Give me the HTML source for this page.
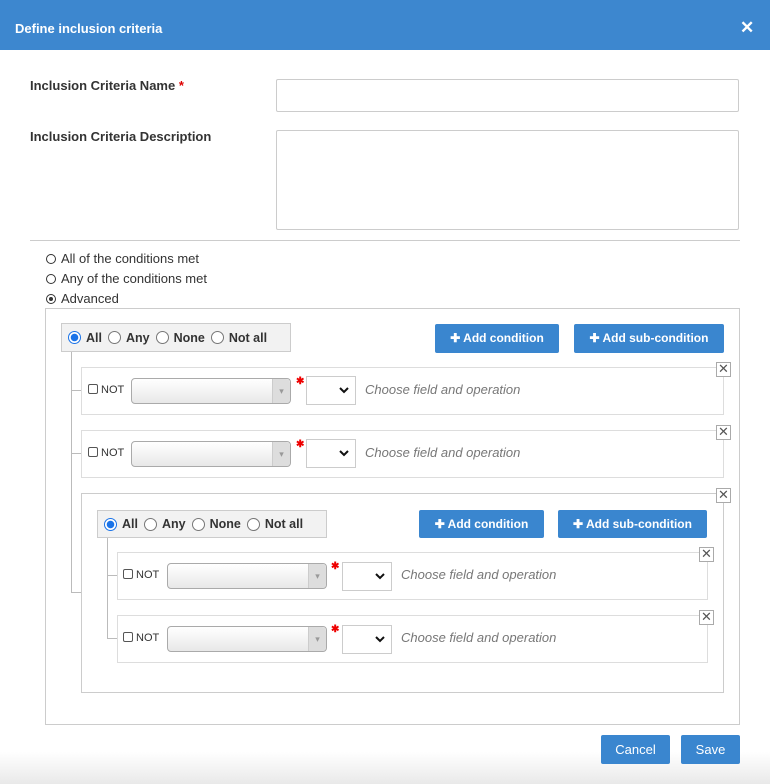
<!DOCTYPE html>
<html><head><meta charset="utf-8"><style>
*{box-sizing:border-box;margin:0;padding:0}
body{width:770px;height:784px;position:relative;overflow:hidden;background:#fff;font-family:"Liberation Sans",sans-serif;color:#333}
.a{position:absolute}
.hdr{left:0;top:0;width:770px;height:50px;background:#3d87cf;color:#fff;font-weight:bold;font-size:13px;line-height:13px;padding:22px 0 0 15px}
.lbl{font-weight:bold;font-size:13px;color:#333}
.inp{border:1px solid #ccc;background:#fff;border-radius:2px}
.rad{font-size:13px;color:#333}
.rad i{display:inline-block;width:10px;height:10px;border:1.5px solid #333;border-radius:50%;vertical-align:-1px;margin-right:5px;position:relative}
.rad i.on:after{content:"";position:absolute;left:1.5px;top:1.5px;width:4px;height:4px;border-radius:50%;background:#333}
.tb{background:#f2f2f2;border:1px solid #ccc;font-size:12.5px;font-weight:bold;color:#333;display:flex;align-items:center;padding-left:6px}
.tb b{display:inline-block;width:13px;height:13px;border:1px solid #777;border-radius:50%;background:#fff;margin:0 5px 0 0;vertical-align:-2px}
.tb b.on{border:1px solid #1a73e8;background:radial-gradient(circle,#1a73e8 0 3.5px,#fff 4px)}
.tb span{margin-right:6px}
.btn{background:#3a86cf;color:#fff;font-weight:bold;font-size:12px;border-radius:2px;text-align:center;line-height:29px}
.row{border:1px solid #ddd;background:#fff}
.x{width:15px;height:15px;border:1px solid #aaa;background:#fff;font-size:13px;line-height:12px;text-align:center;color:#555}
.ln{background:#bbb}
.cb{font-size:11px;color:#333}
.cb i{display:inline-block;width:10px;height:10px;border:1px solid #555;border-radius:2px;vertical-align:-1px;margin-right:3px}
.sel{border:1px solid #aaa;border-radius:4px;background:linear-gradient(#fff,#e8e8e8)}
.sel:after{content:"▾";position:absolute;right:0;top:0;width:17px;height:100%;border-left:1px solid #ccc;background:#ddd;color:#999;font-size:9px;text-align:center;line-height:24px;border-radius:0 4px 4px 0}
.sm{border:1px solid #ccc;background:#fff}
.sm svg{position:absolute;right:6px;top:10px}
.st{color:#e00;font-size:10px;font-weight:bold}
.ph{font-style:italic;font-size:13px;color:#777}
</style></head><body>
<div class="a hdr">Define inclusion criteria</div>
<div class="a" style="left:740px;top:18px;color:#fff;font-size:17px;font-weight:bold">✕</div>
<div class="a lbl" style="left:30px;top:78px">Inclusion Criteria Name <span style="color:#d00">*</span></div>
<div class="a inp" style="left:276px;top:79px;width:463px;height:33px"></div>
<div class="a lbl" style="left:30px;top:129px">Inclusion Criteria Description</div>
<div class="a inp" style="left:276px;top:130px;width:463px;height:100px"></div>
<div class="a" style="left:30px;top:240px;width:710px;height:1px;background:#ccc"></div>
<div class="a rad" style="left:46px;top:251px"><i></i>All of the conditions met</div>
<div class="a rad" style="left:46px;top:271px"><i></i>Any of the conditions met</div>
<div class="a rad" style="left:46px;top:291px"><i class="on"></i>Advanced</div>
<div class="a" style="left:45px;top:308px;width:695px;height:417px;border:1px solid #ccc"></div>

<div class="a tb" style="left:61px;top:323px;width:230px;height:29px"><b class="on"></b><span>All</span><b></b><span>Any</span><b></b><span>None</span><b></b><span>Not all</span></div>
<div class="a btn" style="left:435px;top:324px;width:124px;height:29px">✚ Add condition</div>
<div class="a btn" style="left:574px;top:324px;width:150px;height:29px">✚ Add sub-condition</div>
<div class="a ln" style="left:71px;top:352px;width:1px;height:241px"></div>
<div class="a ln" style="left:71px;top:390px;width:10px;height:1px"></div>
<div class="a ln" style="left:71px;top:453px;width:10px;height:1px"></div>
<div class="a ln" style="left:71px;top:592px;width:10px;height:1px"></div>

<div class="a row" style="left:81px;top:367px;width:643px;height:48px"></div>
<div class="a x" style="left:716px;top:362px">✕</div>
<div class="a cb" style="left:88px;top:384px"><i></i>NOT</div>
<div class="a sel" style="left:131px;top:378px;width:160px;height:26px"></div>
<div class="a st" style="left:296px;top:376px">✱</div>
<div class="a sm" style="left:306px;top:376px;width:50px;height:29px"><svg width="10" height="7"><path d="M1 1l4 4 4-4" stroke="#111" stroke-width="2" fill="none"/></svg></div>
<div class="a ph" style="left:365px;top:382px">Choose field and operation</div>

<div class="a row" style="left:81px;top:430px;width:643px;height:48px"></div>
<div class="a x" style="left:716px;top:425px">✕</div>
<div class="a cb" style="left:88px;top:447px"><i></i>NOT</div>
<div class="a sel" style="left:131px;top:441px;width:160px;height:26px"></div>
<div class="a st" style="left:296px;top:439px">✱</div>
<div class="a sm" style="left:306px;top:439px;width:50px;height:29px"><svg width="10" height="7"><path d="M1 1l4 4 4-4" stroke="#111" stroke-width="2" fill="none"/></svg></div>
<div class="a ph" style="left:365px;top:445px">Choose field and operation</div>

<div class="a" style="left:81px;top:493px;width:643px;height:200px;border:1px solid #ccc"></div>
<div class="a x" style="left:716px;top:488px">✕</div>
<div class="a tb" style="left:97px;top:510px;width:230px;height:28px"><b class="on"></b><span>All</span><b></b><span>Any</span><b></b><span>None</span><b></b><span>Not all</span></div>
<div class="a btn" style="left:419px;top:510px;width:125px;height:28px;line-height:28px">✚ Add condition</div>
<div class="a btn" style="left:558px;top:510px;width:149px;height:28px;line-height:28px">✚ Add sub-condition</div>
<div class="a ln" style="left:107px;top:538px;width:1px;height:101px"></div>
<div class="a ln" style="left:107px;top:575px;width:10px;height:1px"></div>
<div class="a ln" style="left:107px;top:638px;width:10px;height:1px"></div>

<div class="a row" style="left:117px;top:552px;width:591px;height:48px"></div>
<div class="a x" style="left:699px;top:547px">✕</div>
<div class="a cb" style="left:123px;top:569px"><i></i>NOT</div>
<div class="a sel" style="left:167px;top:563px;width:160px;height:26px"></div>
<div class="a st" style="left:331px;top:561px">✱</div>
<div class="a sm" style="left:342px;top:562px;width:50px;height:29px"><svg width="10" height="7"><path d="M1 1l4 4 4-4" stroke="#111" stroke-width="2" fill="none"/></svg></div>
<div class="a ph" style="left:401px;top:567px">Choose field and operation</div>

<div class="a row" style="left:117px;top:615px;width:591px;height:48px"></div>
<div class="a x" style="left:699px;top:610px">✕</div>
<div class="a cb" style="left:123px;top:632px"><i></i>NOT</div>
<div class="a sel" style="left:167px;top:626px;width:160px;height:26px"></div>
<div class="a st" style="left:331px;top:624px">✱</div>
<div class="a sm" style="left:342px;top:625px;width:50px;height:29px"><svg width="10" height="7"><path d="M1 1l4 4 4-4" stroke="#111" stroke-width="2" fill="none"/></svg></div>
<div class="a ph" style="left:401px;top:630px">Choose field and operation</div>

<div class="a" style="left:0;top:752px;width:770px;height:32px;background:linear-gradient(#fff,#e9e9e9)"></div>
<div class="a btn" style="left:601px;top:735px;width:69px;height:29px;font-weight:normal;font-size:13px;line-height:30px">Cancel</div>
<div class="a btn" style="left:681px;top:735px;width:59px;height:29px;font-weight:normal;font-size:13px;line-height:30px">Save</div>
</body></html>
